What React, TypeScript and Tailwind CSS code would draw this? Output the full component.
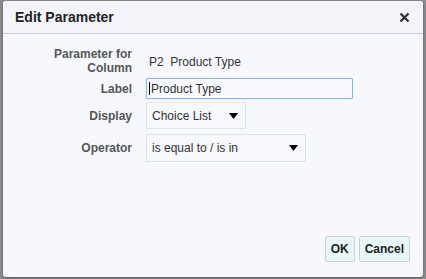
const Arrow = () => (
  <svg width="9" height="6" viewBox="0 0 9 6" className="shrink-0">
    <path d="M0 0 H9 L4.5 6 Z" fill="#000" />
  </svg>
);

export default function App() {
  return (
    <div
      className="w-[426px] h-[279px] bg-[#8c8c8c] pl-[3px] pr-[3px] pt-[1px] overflow-hidden"
      style={{ fontFamily: '"Liberation Sans", Arial, sans-serif' }}
    >
      <div className="w-[420px] h-[276px] bg-[#f7f8fd] rounded-[3px] flex flex-col shadow-[0_1px_3px_rgba(0,0,0,0.4)]">
        <div className="h-[33px] shrink-0 flex items-center justify-between pl-[12px] pr-[13px] bg-[#f4f5fa] border-b border-[#c6cad6] rounded-t-[3px]">
          <span className="text-[14px] font-bold text-[#222]">Edit Parameter</span>
          <svg width="11" height="11" viewBox="0 0 11 11">
            <path d="M1.5 1.5 L9.5 9.5 M9.5 1.5 L1.5 9.5" stroke="#333" strokeWidth="2.4" />
          </svg>
        </div>
        <div className="flex-1 pt-[13px] text-[12px] text-[#333]">
          <div className="grid grid-cols-[129px_auto] gap-x-[14px] items-center">
            <div className="text-right leading-[14px] font-bold text-[#555]">
              Parameter for
              <br />
              Column
            </div>
            <div className="text-[#333] pl-[3px] pt-[1px]">P2&nbsp;&nbsp;Product Type</div>

            <div className="text-right font-bold text-[#555] mt-[3px]">Label</div>
            <div className="mt-[3px] w-[207px] h-[21px] border border-[#8eb4e6] rounded-[2px] bg-[#f8f9fe] flex items-center pl-[2px] shadow-[0_0_1px_#8eb4e6]">
              <span className="w-px h-[13px] bg-[#000] mr-[1px]" />
              <span className="text-[#333]">Product Type</span>
            </div>

            <div className="text-right font-bold text-[#555] mt-[3px]">Display</div>
            <div className="mt-[3px] w-[100px] h-[27px] border border-[#dde3e8] bg-[#f8f9fe] flex items-center justify-between pl-[5px] pr-[7px]">
              <span className="text-[#333]">Choice List</span>
              <Arrow />
            </div>

            <div className="text-right font-bold text-[#555] mt-[5px]">Operator</div>
            <div className="mt-[5px] w-[160px] h-[28px] border border-[#dde3e8] bg-[#f8f9fe] flex items-center justify-between pl-[5px] pr-[7px]">
              <span className="text-[#333]">is equal to / is in</span>
              <Arrow />
            </div>
          </div>
        </div>
        <div className="flex justify-end gap-[4px] pr-[13px] pb-[15px]">
          <button className="h-[26px] px-[5px] bg-[#e8f6f8] border border-[#c8d4d8] rounded-[2px] text-[12px] font-bold text-[#222]">
            OK
          </button>
          <button className="h-[26px] px-[5px] bg-[#e8f6f8] border border-[#c8d4d8] rounded-[2px] text-[12px] font-bold text-[#222]">
            Cancel
          </button>
        </div>
      </div>
    </div>
  );
}
